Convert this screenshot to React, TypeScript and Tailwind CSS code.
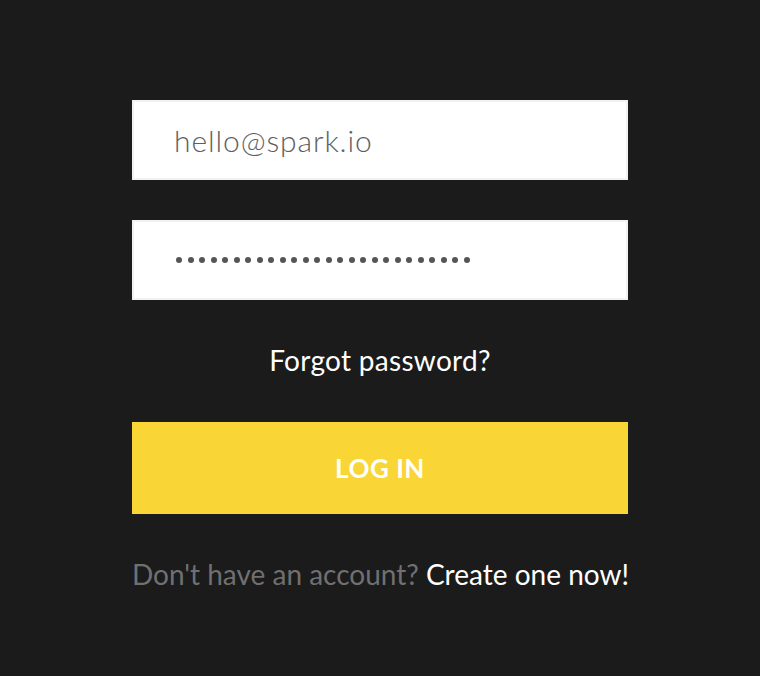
import React from "react";

export default function App() {
  const dots = Array.from({ length: 26 });
  return (
    <div className="min-h-[676px] w-full bg-[#1b1b1b] flex justify-center pt-[100px]" style={{ fontFamily: "Lato, 'Liberation Sans', sans-serif" }}>
      <div className="w-[496px] flex flex-col">
        <div className="h-[80px] bg-white shadow-[inset_0_0_0_2px_#f1f1f1] flex items-center pl-[42px]">
          <span className="text-[30px] text-[#5e5e5e] font-light tracking-[0.9px] leading-none">hello@spark.io</span>
        </div>
        <div className="mt-[40px] h-[80px] bg-white shadow-[inset_0_0_0_2px_#f1f1f1] flex items-center pl-[44px] gap-[5.5px]">
          {dots.map((_, i) => (
            <span key={i} className="w-[6px] h-[6px] rounded-full bg-[#555555]" />
          ))}
        </div>
        <div className="mt-[46px] text-center text-white text-[28px] tracking-[0.3px] leading-none">Forgot password?</div>
        <button className="mt-[48px] h-[92px] bg-[#f9d535] text-white font-bold text-[26px] tracking-[0.5px]">LOG IN</button>
        <div className="mt-[46px] text-center text-[28px] leading-none whitespace-nowrap">
          <span className="text-[#707070]">Don't have an account? </span>
          <span className="text-white">Create one now!</span>
        </div>
      </div>
    </div>
  );
}
